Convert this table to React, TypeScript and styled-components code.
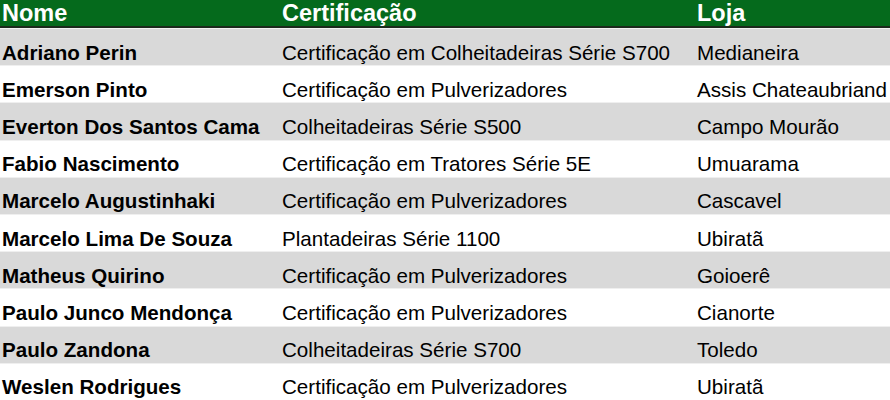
import styled, { createGlobalStyle } from 'styled-components';

const GlobalStyle = createGlobalStyle`
  html, body {
    margin: 0;
    padding: 0;
    background: #ffffff;
  }
  body {
    width: 890px;
    height: 400px;
    overflow: hidden;
    font-family: 'Liberation Sans', Arial, sans-serif;
  }
`;

const Table = styled.div`
  width: 890px;
  display: flex;
  flex-direction: column;
`;

const HeaderRow = styled.div`
  display: grid;
  grid-template-columns: 280px 415px 1fr;
  height: 26px;
  background: #056a1c;
  border-bottom: 2px solid #1c2a1c;
  box-shadow: 0 1px 0 #f2f2f2;
  margin-bottom: 1px;
`;

const HeaderCell = styled.div`
  padding-left: 2px;
  color: #ffffff;
  font-weight: bold;
  font-size: 23.5px;
  line-height: 26px;
  white-space: nowrap;
`;

const Row = styled.div<{ $shaded: boolean }>`
  display: grid;
  grid-template-columns: 280px 415px 1fr;
  height: 37.2px;
  box-sizing: border-box;
  background: ${(p) => (p.$shaded ? '#d9d9d9' : '#ffffff')};
  border-bottom: 1px solid #efefef;
`;

const Cell = styled.div<{ $bold?: boolean }>`
  display: flex;
  align-items: flex-end;
  padding-left: 2px;
  padding-bottom: 2px;
  color: #000000;
  font-size: 20.6px;
  line-height: 1;
  font-weight: ${(p) => (p.$bold ? 'bold' : 'normal')};
  white-space: nowrap;
`;

const rows = [
  ['Adriano Perin', 'Certificação em Colheitadeiras Série S700', 'Medianeira'],
  ['Emerson Pinto', 'Certificação em Pulverizadores', 'Assis Chateaubriand'],
  ['Everton Dos Santos Cama', 'Colheitadeiras Série S500', 'Campo Mourão'],
  ['Fabio Nascimento', 'Certificação em Tratores Série 5E', 'Umuarama'],
  ['Marcelo Augustinhaki', 'Certificação em Pulverizadores', 'Cascavel'],
  ['Marcelo Lima De Souza', 'Plantadeiras Série 1100', 'Ubiratã'],
  ['Matheus Quirino', 'Certificação em Pulverizadores', 'Goioerê'],
  ['Paulo Junco Mendonça', 'Certificação em Pulverizadores', 'Cianorte'],
  ['Paulo Zandona', 'Colheitadeiras Série S700', 'Toledo'],
  ['Weslen Rodrigues', 'Certificação em Pulverizadores', 'Ubiratã'],
];

const App = () => {
  return (
    <>
      <GlobalStyle />
      <Table>
        <HeaderRow>
          <HeaderCell>Nome</HeaderCell>
          <HeaderCell>Certificação</HeaderCell>
          <HeaderCell>Loja</HeaderCell>
        </HeaderRow>
        {rows.map((r, i) => (
          <Row key={r[0]} $shaded={i % 2 === 0}>
            <Cell $bold>{r[0]}</Cell>
            <Cell>{r[1]}</Cell>
            <Cell>{r[2]}</Cell>
          </Row>
        ))}
      </Table>
    </>
  );
};

export default App;
